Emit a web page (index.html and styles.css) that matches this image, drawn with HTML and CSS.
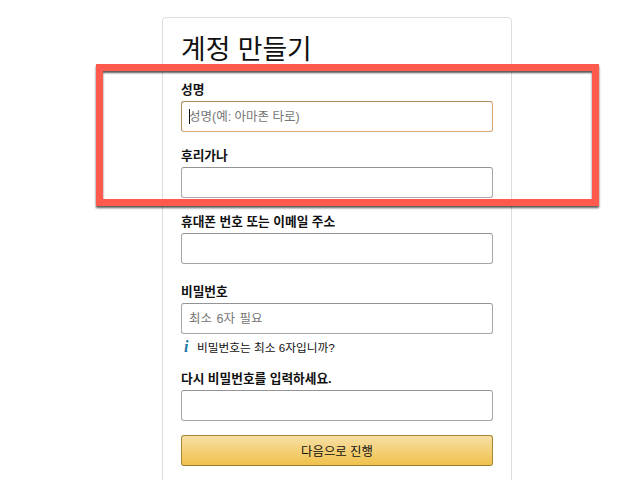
FILE: index.html
```html
<!DOCTYPE html>
<html lang="ko">
<head>
  <meta charset="UTF-8">
  <title>계정 만들기</title>
  <link rel="stylesheet" href="styles.css">
</head>
<body>
  <div class="card">
    <h1>계정 만들기</h1>
    <form>
      <div class="field">
        <label for="name">성명</label>
        <div class="input-wrap">
          <input type="text" id="name" class="focused" placeholder="성명(예: 아마존 타로)">
          <span class="caret"></span>
        </div>
      </div>
      <div class="field">
        <label for="kana">후리가나</label>
        <input type="text" id="kana">
      </div>
      <div class="field field-wide">
        <label for="contact">휴대폰 번호 또는 이메일 주소</label>
        <input type="text" id="contact">
      </div>
      <div class="field">
        <label for="password">비밀번호</label>
        <input type="password" id="password" placeholder="최소 6자 필요">
        <div class="hint"><i class="hint-icon">i</i>비밀번호는 최소 6자입니까?</div>
      </div>
      <div class="field">
        <label for="password2">다시 비밀번호를 입력하세요.</label>
        <input type="password" id="password2">
      </div>
      <button type="button">다음으로 진행</button>
    </form>
  </div>
  <!-- red highlight drawn over the screenshot -->
  <div class="highlight"></div>
</body>
</html>
```

FILE: styles.css
```css
html {
  overflow: hidden;
}
body {
  margin: 0;
  background: #fff;
  color: #111;
  font-family: "Liberation Sans", "Noto Sans CJK KR", sans-serif;
}
.card {
  box-sizing: border-box;
  width: 350px;
  margin: 17px 0 0 162px;
  padding: 12px 18px 30px;
  border: 1px solid #ddd;
  border-radius: 4px;
}
h1 {
  margin: 0 0 11px;
  font-size: 26.8px;
  font-weight: 400;
  line-height: 41px;
}
.field {
  margin-bottom: 16px;
}
.field-wide {
  margin-bottom: 20px;
}
label {
  display: block;
  height: 19px;
  font-size: 12.7px;
  font-weight: 700;
  line-height: 17px;
}
input {
  display: block;
  box-sizing: border-box;
  width: 312px;
  height: 31px;
  padding: 0 7px;
  border: 1px solid #a6a6a6;
  border-top-color: #949494;
  border-radius: 3px;
  font-family: inherit;
  font-size: 12.5px;
  word-spacing: 1px;
  outline: none;
}
input::placeholder {
  color: #767676;
  opacity: 1;
}
input.focused {
  border-color: #b08a5c;
  border-bottom-color: #d8a777;
  border-right-color: #d8a777;
  word-spacing: 0;
}
.input-wrap {
  position: relative;
}
.caret {
  position: absolute;
  left: 8px;
  top: 8px;
  width: 1px;
  height: 15px;
  background: #111;
}
.hint {
  display: flex;
  align-items: center;
  height: 19px;
  margin-top: 3px;
  margin-bottom: -1px;
  font-size: 11.7px;
}
.hint-icon {
  box-sizing: border-box;
  width: 16px;
  padding-left: 3px;
  color: #1f78a8;
  font-family: "Liberation Serif", serif;
  font-size: 16px;
  font-weight: 700;
}
button {
  display: block;
  box-sizing: border-box;
  width: 312px;
  height: 31px;
  margin-top: -2px;
  padding: 0;
  border: 1px solid #a88734;
  border-bottom-color: #9c7e31;
  border-radius: 3px;
  background: linear-gradient(to bottom, #f7dfa5, #f0c14b);
  color: #111;
  font-family: inherit;
  font-size: 12.4px;
}
.highlight {
  position: absolute;
  left: 96px;
  top: 64px;
  box-sizing: border-box;
  width: 503px;
  height: 142px;
  border: 7px solid #ff5a4d;
  box-shadow: 0 2px 2px rgba(0, 0, 0, 0.65), inset 0 2px 2px rgba(0, 0, 0, 0.65);
}
```
